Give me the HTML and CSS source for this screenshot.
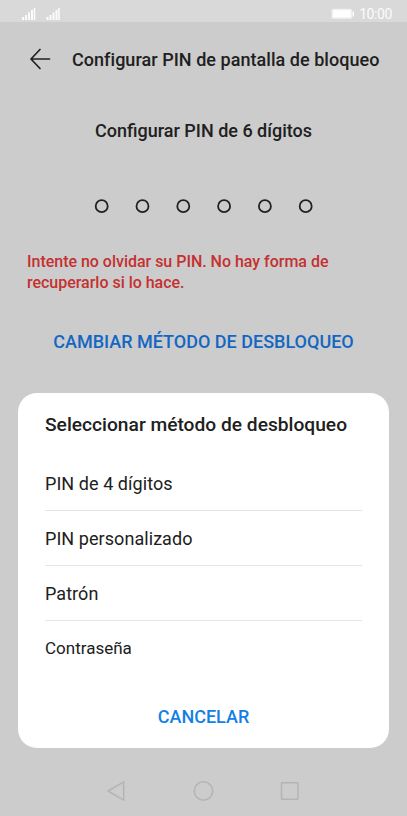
FILE: index.html
```html
<!DOCTYPE html>
<html lang="es">
<head>
<meta charset="utf-8">
<title>Configurar PIN</title>
<link rel="stylesheet" href="styles.css">
</head>
<body>
<div class="status">
  <svg class="signals" width="40" height="14" viewBox="0 0 40 14" fill="#fbfbfb">
    <path id="bars" d="M1 10h2v3H1zM4 8h2v5H4zM7 5.500h2v7.500H7zM10 3h2v10h-2zM12.700 1h1.600v12h-1.600z"/>
    <use href="#bars" x="24.500"/>
  </svg>
  <div class="power">
    <svg width="24" height="12" viewBox="0 0 24 12"><rect x=".5" y=".8" width="20.500" height="10" rx="1.500" fill="#f0f0f0"/><rect x="2" y="2.200" width="17.500" height="7.200" fill="#fff"/><path d="M21.500 3.500h1.500v5h-1.500z" fill="#fff"/></svg>
    <span class="clock">10:00</span>
  </div>
</div>
<header class="bar">
  <svg class="back" width="22" height="22" viewBox="0 0 22 22" fill="none" stroke="#202020" stroke-width="1.700" stroke-linecap="round" stroke-linejoin="round"><path d="M20.500 11H2M11 1.500L2 11l9 9.500"/></svg>
  <h1 class="title">Configurar PIN de pantalla de bloqueo</h1>
</header>
<main>
  <h2 class="prompt"><span>Configurar PIN de 6 dígitos</span></h2>
  <svg class="pin" width="219" height="15" viewBox="0 0 219 15" fill="none" stroke="#202020" stroke-width="1.800"><circle cx="7.700" cy="7.200" r="6"/><circle cx="48.500" cy="7.200" r="6"/><circle cx="89.300" cy="7.200" r="6"/><circle cx="130.100" cy="7.200" r="6"/><circle cx="170.900" cy="7.200" r="6"/><circle cx="211.700" cy="7.200" r="6"/></svg>
  <p class="warning">Intente no olvidar su PIN. No hay forma de<br>recuperarlo si lo hace.</p>
  <div class="change"><span>CAMBIAR MÉTODO DE DESBLOQUEO</span></div>
</main>
<section class="dialog">
  <h2 class="heading">Seleccionar método de desbloqueo</h2>
  <ul class="options">
    <li>PIN de 4 dígitos</li>
    <li>PIN personalizado</li>
    <li>Patrón</li>
    <li class="last">Contraseña</li>
  </ul>
  <div class="cancel">CANCELAR</div>
</section>
<nav class="nav">
  <svg width="194" height="22" viewBox="0 0 194 22" fill="none" stroke="#b4b4b4" stroke-width="1.500" stroke-linejoin="round"><path d="M2 11L17.700 1.800v18.400z"/><circle cx="97.500" cy="11" r="9.200"/><rect x="175.500" y="2.800" width="16.500" height="16.500" rx=".5"/></svg>
</nav>
</body>
</html>
```
FILE: styles.css
```css
* { box-sizing: border-box; }
body { margin: 0; height: 816px; overflow: hidden; background: #ccc; color: #202020; font-family: Roboto, sans-serif; display: flex; flex-direction: column; }
h1, h2, p, ul { margin: 0; padding: 0; }
.status { height: 22px; flex: none; background: #d9d9d9; display: flex; justify-content: space-between; padding: 7px 15px 0 21px; }
.signals { display: block; }
.power { display: flex; gap: 4px; height: 14px; color: #fbfbfb; }
.power svg { margin-top: 1px; }
.clock { font-size: 14px; line-height: 14px; letter-spacing: -.4px; }
.bar { height: 74px; flex: none; display: flex; align-items: center; padding-left: 29px; gap: 21px; }
.title { font-size: 18px; font-weight: 500; letter-spacing: .04px; white-space: nowrap; }
.prompt { margin-top: 23px; height: 24px; line-height: 24px; font-size: 18px; font-weight: 500; text-align: center; white-space: nowrap; }
.pin { display: block; margin: 56px auto 0; }
.warning { margin: 37px 0 0 27px; height: 42px; font-size: 16px; line-height: 21px; font-weight: 500; letter-spacing: -.02px; color: #c53030; white-space: nowrap; }
.change { margin-top: 37px; height: 24px; line-height: 24px; font-size: 18px; font-weight: 500; color: #1367c3; text-align: center; white-space: nowrap; }
.dialog { margin: 39px 18px 0; height: 355px; flex: none; padding: 0 27px; background: #fff; border-radius: 19px; }
.heading { padding-top: 20px; height: 64px; line-height: 24px; font-size: 19.200px; font-weight: 500; white-space: nowrap; }
.options { list-style: none; }
.options li { height: 55px; line-height: 55px; border-bottom: 1px solid #e5e5e5; font-size: 18px; letter-spacing: .06px; }
.options li:first-child { height: 54px; line-height: 54px; }
.options .last { height: 56px; line-height: 55px; border: 0; font-size: 17px; letter-spacing: 0; }
.cancel { margin-top: 28px; line-height: 24px; font-size: 18px; font-weight: 500; color: #147fe5; text-align: center; }
.nav { padding: 32px 0 0 106px; }
.nav svg { display: block; }
```
